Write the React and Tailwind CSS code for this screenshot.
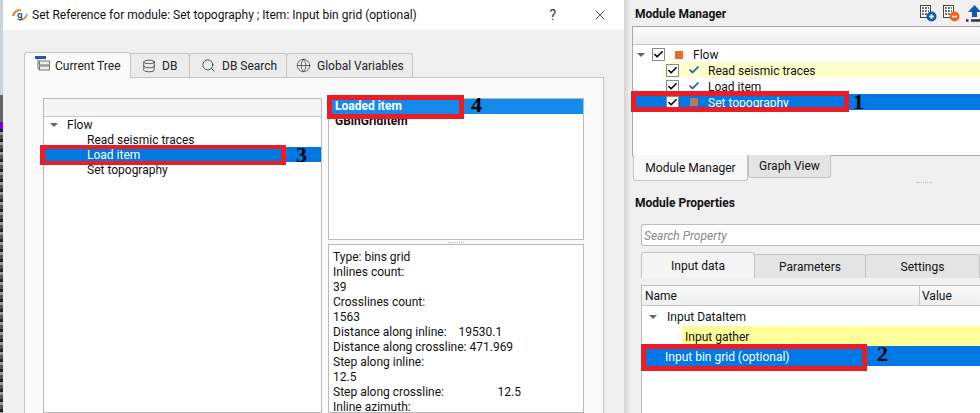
import React from 'react';
import { Database, Search, Globe, Check, X } from 'lucide-react';

const font = { fontFamily: 'Roboto, "Noto Sans", sans-serif' };

function Tag({ className, children }) {
  // red annotation frame that was painted over the screenshot
  return <div className={`absolute border-[#ed1c24] ${className}`}>{children}</div>;
}

function Num({ className, children }) {
  return (
    <span className={`absolute font-['Liberation_Serif',serif] font-bold text-[22px] leading-none text-black ${className}`}>
      {children}
    </span>
  );
}

function TreeIcon() {
  return (
    <svg width="16" height="16" viewBox="0 0 16 16" fill="none" className="shrink-0 -mt-[3px]">
      <rect x="0" y="0" width="11" height="3" fill="#1d5c9e" />
      <path d="M3 3v10h2M3 7h2" stroke="#777" />
      <rect x="4.5" y="5" width="10" height="4" fill="#eee" stroke="#777" />
      <rect x="4.5" y="10" width="10" height="4" fill="#eee" stroke="#777" />
    </svg>
  );
}

function AppLogo() {
  return (
    <svg width="16" height="12" viewBox="0 0 16 12" className="shrink-0">
      <path d="M1 7C2 3 5 1 9 1" stroke="#f07a1f" strokeWidth="2" fill="none" />
      <path d="M15 5c-1 4-4 6-8 6" stroke="#f07a1f" strokeWidth="1.5" fill="none" />
      <text x="5" y="9" fontSize="9" fontWeight="700" fill="#1d5c9e" fontFamily="Noto Sans">g</text>
    </svg>
  );
}

function GridBadge({ color, minus }) {
  return (
    <svg width="17" height="17" viewBox="0 0 17 17" className="shrink-0">
      <rect x="0.5" y="0.5" width="10" height="12" fill="#fff" stroke="#444" />
      <path d="M2 3h2M5 3h2M8 3h1M2 6h2M5 6h2M8 6h1M2 9h2M5 9h2" stroke="#444" strokeWidth="1.5" />
      <circle cx="11.5" cy="11.5" r="5" fill={color} />
      <path d={minus ? 'M9 11.5h5' : 'M9 11.5h5M11.5 9v5'} stroke="#fff" strokeWidth="1.6" />
    </svg>
  );
}

function UploadIcon() {
  return (
    <svg width="17" height="17" viewBox="0 0 17 17" className="shrink-0">
      <path d="M8.5 0L15 7h-4v5H6V7H2z" fill="#0b5cab" />
      <path d="M0 15.5h2.5M5 15.5h12" stroke="#333" strokeWidth="2.4" />
    </svg>
  );
}

function Caret() {
  return <span className="block w-0 h-0 border-x-[4px] border-x-transparent border-t-[4px] border-t-[#666]" />;
}

function DlgTab({ active, className, children }) {
  return (
    <div
      className={`flex items-center gap-[6px] border border-[#c4c4c4] rounded-t-[3px] pl-[11px] whitespace-nowrap overflow-hidden ${
        active ? 'bg-[#fafafa] border-b-0 h-[26px] relative z-10 -mb-px' : 'bg-[#ececec] h-[24px] -ml-px border-b-0'
      } ${className || ''}`}
    >
      {children}
    </div>
  );
}

function CheckBox() {
  return (
    <span className="w-[13px] h-[13px] bg-white border border-[#8a8a8a] flex items-center justify-center shrink-0">
      <Check size={11} strokeWidth={3.5} className="text-black" />
    </span>
  );
}

function Dialog() {
  return (
    <div className="w-[621px] h-full flex flex-col bg-[#f0f0f0] shrink-0">
      <div className="h-[30px] bg-white flex items-center pl-[9px] pr-[16px] shrink-0">
        <AppLogo />
        <span className="ml-[4px] text-[12px] text-[#111] flex-1">Set Reference for module: Set topography ; Item: Input bin grid (optional)</span>
        <span className="text-[14px] text-[#333] mr-[36px]">?</span>
        <X size={16} strokeWidth={1} className="text-black" />
      </div>
      <div className="flex-1 min-h-0 pl-[21px] pr-[21px] pt-[21px] flex flex-col">
        <div className="flex items-end text-[12px] text-[#222] h-[26px] shrink-0">
          <DlgTab active className="w-[107px] !pl-[10px] !gap-[4px]"><TreeIcon />Current Tree</DlgTab>
          <DlgTab className="w-[60px]"><Database size={14} strokeWidth={1.2} />DB</DlgTab>
          <DlgTab className="w-[98px]"><Search size={15} strokeWidth={1.2} />DB Search</DlgTab>
          <DlgTab className="w-[127px] !pl-[9px]"><Globe size={15} strokeWidth={1} />Global Variables</DlgTab>
        </div>
        <div className="flex-1 min-h-0 bg-[#fafafa] border border-[#c4c4c4] border-b-0 pl-[18px] pt-[20px] flex gap-[6px] w-[580px]">
          {/* tree */}
          <div className="w-[279px] h-full border border-[#b9b9b9] bg-white text-[12px] leading-[15px] text-[#111]">
            <div className="h-[18px] bg-[#f5f5f5] border-b border-[#c8c8c8]" />
            <div>
              <div className="h-[15px] flex items-center pl-[6px] gap-[9px] pt-[1px]"><Caret />Flow</div>
              <div className="h-[15px] pl-[43px] pt-[1px]">Read seismic traces</div>
              <div className="relative h-[15px] pl-[43px] pt-[1px] bg-[#0078e0] text-white">
                Load item
                <Tag className="left-[-4px] top-[-2px] w-[246px] h-[20px] border-x-[5px] border-y-[4px]" />
                <Num className="left-[252px] top-[-3px]">3</Num>
              </div>
              <div className="h-[15px] pl-[43px] pt-[1px]">Set topography</div>
            </div>
          </div>
          {/* item list + details */}
          <div className="w-[256px] h-full flex flex-col text-[12px] leading-[15px] text-[#111]">
            <div className="h-[142px] border border-[#b9b9b9] bg-white shrink-0">
              <div className="relative h-[15px] pl-[6px] bg-[#148aeb] text-white font-bold">
                Loaded item
                <Tag className="left-[-2px] top-[-4px] w-[137px] h-[24px] border-x-[5px] border-y-[5px]" />
                <Num className="left-[142px] top-[-5px]">4</Num>
              </div>
              <div className="h-[15px] pl-[6px] font-bold">GBinGridItem</div>
            </div>
            <div className="h-[4px] flex items-center justify-center shrink-0">
              <span className="w-[16px] border-t border-dotted border-[#bbb]" />
            </div>
            <div className="flex-1 min-h-0 border border-[#b9b9b9] bg-white pl-[4px] pt-[5px] overflow-hidden">
              <p>Type: bins grid</p>
              <p>Inlines count:</p>
              <p>39</p>
              <p>Crosslines count:</p>
              <p>1563</p>
              <p className="whitespace-pre">Distance along inline:    19530.1</p>
              <p className="whitespace-pre">Distance along crossline: 471.969</p>
              <p>Step along inline:</p>
              <p>12.5</p>
              <p className="whitespace-pre">Step along crossline:                  12.5</p>
              <p>Inline azimuth:</p>
            </div>
          </div>
        </div>
      </div>
    </div>
  );
}

function ManagerRow({ className, children }) {
  return <div className={`relative h-[16px] flex items-center ${className || ''}`}>{children}</div>;
}

function RightPanel() {
  return (
    <div className="flex-1 min-w-0 h-full flex flex-col pl-[11px] text-[12px] text-[#111] bg-gradient-to-r from-[#d4d4d4] to-[#f0f0f0] to-[7px]">
      <div className="h-[26px] flex items-center shrink-0 pt-[2px]">
        <span className="font-bold flex-1">Module Manager</span>
        <div className="flex gap-[6px] w-[60px] overflow-hidden -mt-[2px]">
          <GridBadge color="#0b5cab" />
          <GridBadge color="#f0661a" minus />
          <UploadIcon />
        </div>
      </div>
      <div className="h-[130px] border border-[#a9a9a9] border-r-0 bg-white shrink-0 -ml-[3px]">
        <div className="h-[18px] bg-gradient-to-b from-[#fbfbfb] to-[#eeeeee] border-b border-[#c8c8c8]" />
        <div className="h-[1px]" />
        <ManagerRow className="pl-[4px] pt-[1px]">
          <Caret />
          <span className="ml-[7px]"><CheckBox /></span>
          <span className="ml-[10px] w-[8px] h-[8px] bg-[#ee6c1f]" />
          <span className="ml-[10px]">Flow</span>
        </ManagerRow>
        <ManagerRow className="ml-[30px] pl-[3px] bg-[#ffffcc]">
          <CheckBox />
          <Check size={12} strokeWidth={3.5} className="ml-[9px] text-[#0b5cab]" />
          <span className="ml-[8px] pt-[1px]">Read seismic traces</span>
        </ManagerRow>
        <ManagerRow className="pl-[33px]">
          <CheckBox />
          <Check size={12} strokeWidth={3.5} className="ml-[9px] text-[#0b5cab]" />
          <span className="ml-[8px] pt-[1px]">Load item</span>
        </ManagerRow>
        <ManagerRow className="pl-[33px] bg-[#0078e6] text-white">
          <CheckBox />
          <span className="ml-[11px] w-[8px] h-[8px] bg-[#b27a66]" />
          <span className="ml-[10px] pt-[1px]">Set topography</span>
          <Tag className="left-[-2px] top-[-3px] w-[218px] h-[21px] border-x-[5px] border-y-[5px]" />
          <Num className="left-[220px] top-[-3px]">1</Num>
        </ManagerRow>
      </div>
      <div className="h-[26px] flex items-start shrink-0 -ml-[2px]">
        <div className="w-[115px] h-[26px] -mt-px border border-t-0 border-[#c4c4c4] rounded-b-[3px] bg-[#f8f8f8] flex items-center justify-center">Module Manager</div>
        <div className="w-[83px] h-[23px] -mt-px border border-t-0 border-[#c4c4c4] rounded-b-[3px] bg-[#e4e4e4] flex items-center justify-center">Graph View</div>
      </div>
      <div className="h-[3px] flex justify-end pr-[48px] shrink-0">
        <span className="w-[16px] border-t border-dotted border-[#bbb]" />
      </div>
      <div className="h-[36px] flex items-center font-bold shrink-0">Module Properties</div>
      <div className="pl-[6px] flex-1 min-h-0 flex flex-col">
        <div className="h-[22px] bg-white border border-r-0 border-[#bdbdbd] rounded-l-[3px] flex items-center pl-[2px] pt-[2px] italic text-[#8a8a8a] shrink-0 mt-[3px]">Search Property</div>
        <div className="h-[26px] flex items-end mt-[6px] shrink-0">
          <div className="w-[114px] h-[26px] bg-[#f5f5f5] border border-b-0 border-[#c4c4c4] rounded-t-[3px] flex items-center justify-center">Input data</div>
          <div className="w-[112px] h-[24px] bg-[#e4e4e4] border border-b-0 border-[#c4c4c4] rounded-t-[3px] -ml-px flex items-center justify-center">Parameters</div>
          <div className="flex-1 h-[24px] bg-[#e4e4e4] border border-b-0 border-[#c4c4c4] rounded-t-[3px] -ml-px flex items-center justify-center">Settings</div>
        </div>
        <div className="flex-1 min-h-0 mt-[7px] bg-white border-l border-t border-[#bdbdbd]">
          <div className="h-[20px] bg-gradient-to-b from-[#fbfbfb] to-[#eeeeee] border-b border-[#c8c8c8] flex items-center">
            <span className="w-[278px] pl-[3px] pt-[1px] border-r border-[#c8c8c8] h-full flex items-center">Name</span>
            <span className="pl-[2px] pt-[1px]">Value</span>
          </div>
          <div className="h-[20px] flex items-center pl-[7px] gap-[10px] pt-[2px]"><Caret />Input DataItem</div>
          <div className="h-[20px] ml-[40px] bg-[#ffff99] flex items-center pl-[3px] pt-[2px]">Input gather</div>
          <div className="relative h-[20px] bg-[#0078e6] text-white flex items-center pl-[23px] pt-[2px]">
            Input bin grid (optional)
            <Tag className="left-[-1px] top-[-2px] w-[226px] h-[27px] border-x-[5px] border-y-[5px]" />
            <Num className="left-[235px] top-[-3px]">2</Num>
          </div>
        </div>
      </div>
    </div>
  );
}

export default function App() {
  return (
    <div className="w-[980px] h-[413px] flex overflow-hidden bg-[#f0f0f0]" style={font}>
      {/* sliver of the desktop behind the dialog */}
      <div className="w-[3px] h-full shrink-0 flex flex-col">
        <div className="h-[95px] bg-[#c9d3da]" />
        <div className="h-[27px] bg-[#666]" />
        <div className="h-[7px] bg-[#7a00d6]" />
        <div className="flex-1 bg-[repeating-linear-gradient(180deg,#222_0px,#222_3px,#999_3px,#999_6px,#555_6px,#555_10px)]" />
      </div>
      <Dialog />
      <RightPanel />
    </div>
  );
}
